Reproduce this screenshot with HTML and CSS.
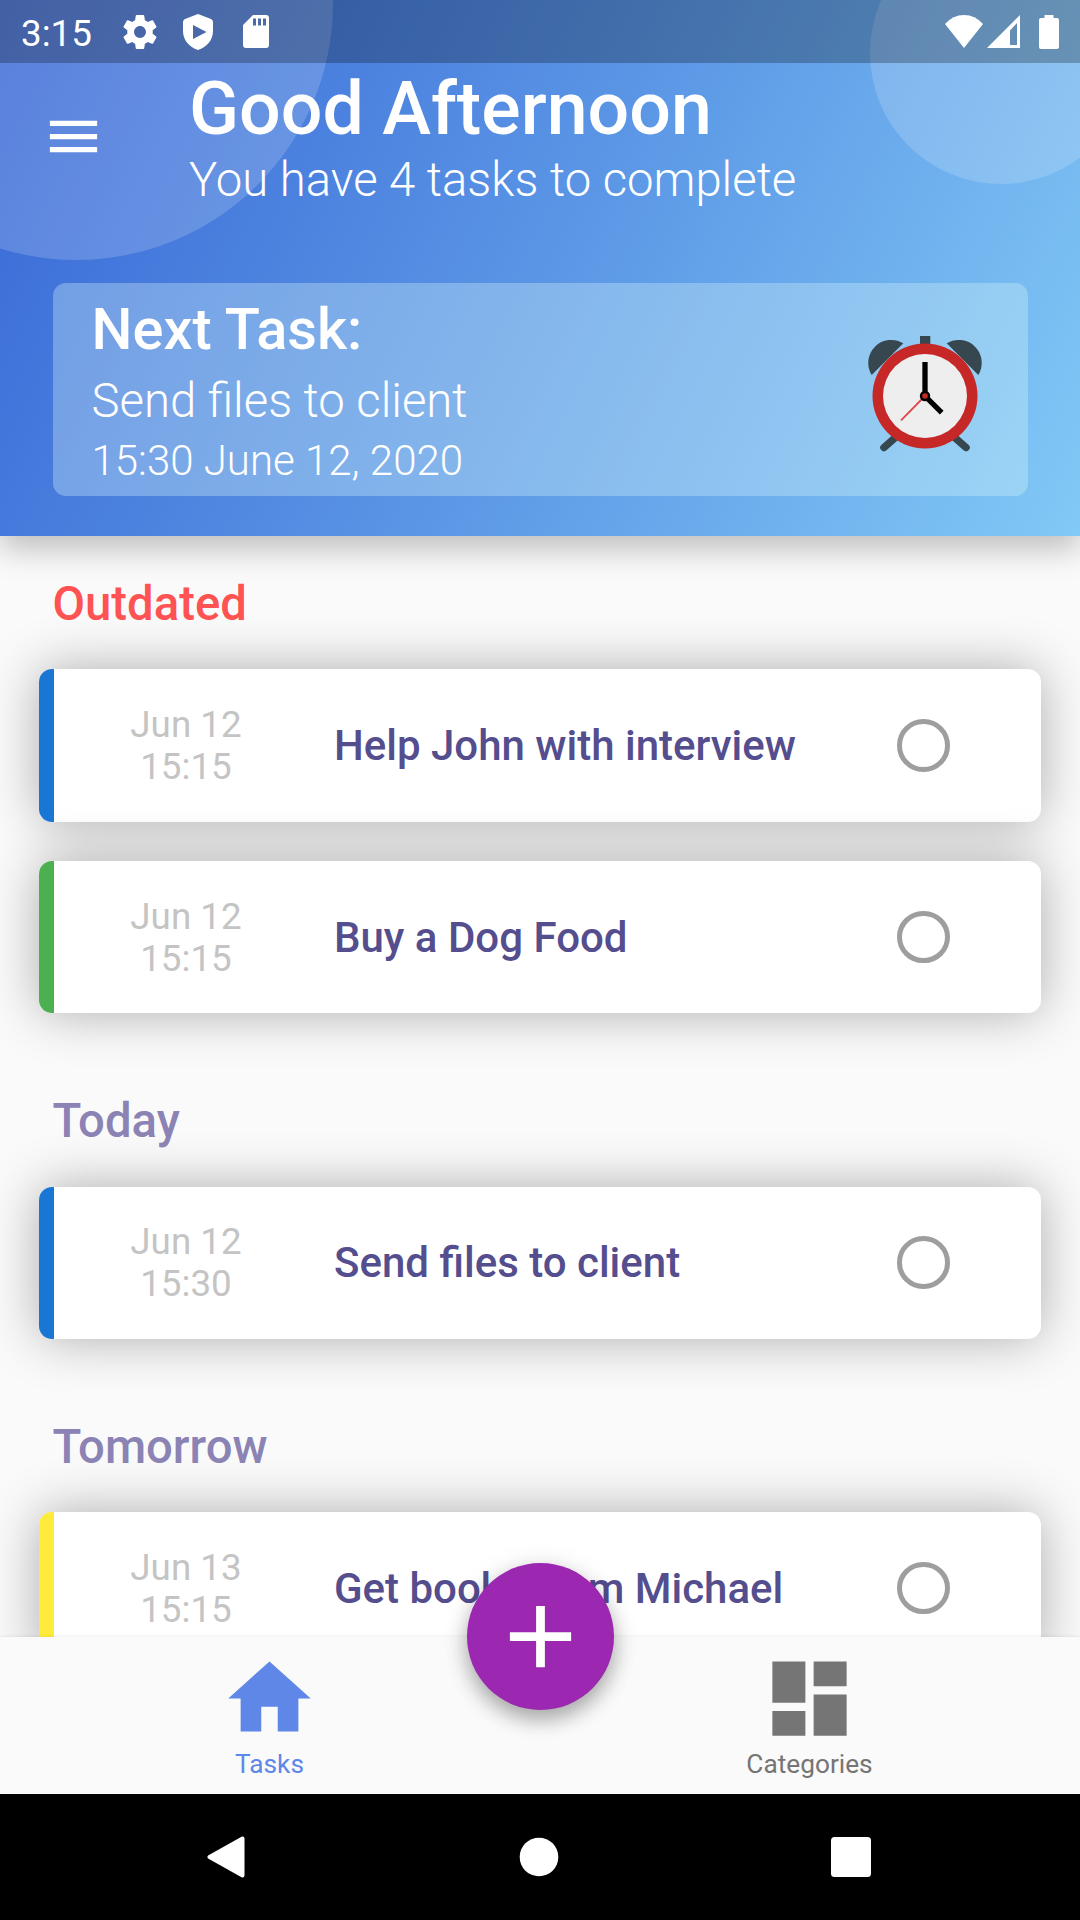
FILE: index.html
```html
<!DOCTYPE html>
<html lang="en">
<head>
    <meta charset="UTF-8">
    <title>Tasks</title>
    <link rel="stylesheet" href="styles.css">
</head>
<body>
<div class="screen">
    <header class="header">
        <div class="bubble bubble-left"></div>
        <div class="bubble bubble-right"></div>

        <div class="status-bar">
            <span class="clock">3:15</span>
            <svg class="status-gear" viewBox="2 2 20 20"><path d="M19.43 12.98c.04-.32.07-.64.07-.98s-.03-.66-.07-.98l2.11-1.65c.19-.15.24-.42.12-.64l-2-3.46c-.12-.22-.39-.3-.61-.22l-2.49 1c-.52-.4-1.08-.73-1.69-.98l-.38-2.65C14.46 2.18 14.25 2 14 2h-4c-.25 0-.46.18-.49.42l-.38 2.65c-.61.25-1.17.59-1.69.98l-2.49-1c-.23-.09-.49 0-.61.22l-2 3.46c-.13.22-.07.49.12.64l2.11 1.65c-.04.32-.07.65-.07.98s.03.66.07.98l-2.11 1.65c-.19.15-.24.42-.12.64l2 3.46c.12.22.39.3.61.22l2.49-1c.52.4 1.08.73 1.69.98l.38 2.65c.03.24.24.42.49.42h4c.25 0 .46-.18.49-.42l.38-2.65c.61-.25 1.17-.59 1.69-.98l2.49 1c.23.09.49 0 .61-.22l2-3.46c.12-.22.07-.49-.12-.64l-2.11-1.65zM12 15.5c-1.93 0-3.5-1.57-3.5-3.5s1.57-3.5 3.5-3.5 3.500 1.57 3.500 3.500-1.57 3.500-3.500 3.500z"/></svg>
            <svg class="status-shield" viewBox="0 0 30 36"><path fill-rule="evenodd" d="M15 0L28 5Q30 6 30 8V17C30 26 24 33 15 36C6 33 0 26 0 17V8Q0 6 2 5ZM10 11V25L23.500 18Z"/></svg>
            <svg class="status-sd" viewBox="0 0 26 33"><path fill-rule="evenodd" d="M10 0H23Q26 0 26 3V30Q26 33 23 33H3Q0 33 0 30V10ZM10 3.500V10.500H13V3.500ZM15 3.500V10.500H18V3.500ZM20 3.500V10.500H23V3.500Z"/></svg>
            <span class="spacer"></span>
            <svg class="status-wifi" viewBox="0 0 38 33"><path d="M0 9Q8 0 19 0T38 9L19 33Z"/></svg>
            <svg class="status-signal" viewBox="0 0 33 33"><path fill-rule="evenodd" d="M0 33L33 0V33ZM23 15.500V30H30V8Z"/></svg>
            <svg class="status-battery" viewBox="0 0 20 34"><path d="M5.500 0H14.500V3H18Q20 3 20 5V32Q20 34 18 34H2Q0 34 0 32V5Q0 3 2 3H5.500Z"/></svg>
        </div>

        <div class="app-bar">
            <svg class="menu" viewBox="0 0 24 24"><path d="M3 18h18v-2H3v2zm0-5h18v-2H3v2zm0-7v2h18V6H3z"/></svg>
            <div class="greeting">
                <h1>Good Afternoon</h1>
                <p>You have 4 tasks to complete</p>
            </div>
        </div>

        <div class="next-task">
            <div class="next-task-text">
                <h2>Next Task:</h2>
                <p class="next-title">Send files to client</p>
                <p class="next-date">15:30 June 12, 2020</p>
            </div>
            <svg class="alarm" viewBox="0 0 120 120">
                <g fill="#37474f">
                    <path d="M38.300 7.300A23 23 0 0 0 6.700 39Z"/>
                    <path d="M81.700 7.300A23 23 0 0 1 113.300 39Z"/>
                    <path d="M55 0H65.300V12H55Z"/>
                </g>
                <path d="M40 93L19 111.500M80 93L101 111.500" stroke="#37474f" stroke-width="7.500" stroke-linecap="round"/>
                <circle cx="60" cy="60" r="52.500" fill="#c62828"/>
                <circle cx="60" cy="60" r="42" fill="#eee"/>
                <path d="M60 26V60L76.700 76.700" fill="none" stroke="#000" stroke-width="5.300"/>
                <path d="M60 60L36 84.300" stroke="#e0444c" stroke-width="1.800"/>
                <circle cx="60" cy="60" r="5.200" fill="#000"/>
                <circle cx="60" cy="60" r="2.800" fill="#c62828"/>
            </svg>
        </div>
    </header>

    <main class="tasks">
        <h3 class="outdated">Outdated</h3>
        <div class="task blue">
            <div class="date">Jun 12<br>15:15</div>
            <div class="title">Help John with interview</div>
            <div class="check"></div>
        </div>
        <div class="task green">
            <div class="date">Jun 12<br>15:15</div>
            <div class="title">Buy a Dog Food</div>
            <div class="check"></div>
        </div>

        <h3>Today</h3>
        <div class="task blue">
            <div class="date">Jun 12<br>15:30</div>
            <div class="title">Send files to client</div>
            <div class="check"></div>
        </div>

        <h3>Tomorrow</h3>
        <div class="task yellow">
            <div class="date">Jun 13<br>15:15</div>
            <div class="title">Get books from Michael</div>
            <div class="check"></div>
        </div>
    </main>

    <nav class="tabs">
        <div class="tab active">
            <svg viewBox="0 0 24 24"><path d="M10 20v-6h4v6h5v-8h3L12 3 2 12h3v8z"/></svg>
            <span>Tasks</span>
        </div>
        <div class="tab">
            <svg viewBox="0 0 24 24"><path d="M3 13h8V3H3v10zm0 8h8v-6H3v6zm10 0h8V11h-8v10zm0-18v6h8V3h-8z"/></svg>
            <span>Categories</span>
        </div>
        <div class="fab">
            <svg viewBox="0 0 24 24"><path d="M19 13h-6v6h-2v-6H5v-2h6V5h2v6h6v2z"/></svg>
        </div>
    </nav>

    <div class="system-nav">
        <svg viewBox="0 0 42 42"><path d="M3.500 21L36.500 2.500V39.500Z" stroke="#fff" stroke-width="4" stroke-linejoin="round"/></svg>
        <svg viewBox="0 0 42 42"><circle cx="21" cy="21" r="19.300"/></svg>
        <svg viewBox="0 0 42 42"><rect x="1" y="1" width="40" height="40" rx="3.500"/></svg>
    </div>
</div>
</body>
</html>
```
FILE: styles.css
```css
* {
    box-sizing: border-box;
}
body, h1, h2, h3, p {
    margin: 0;
}
body {
    font-family: Roboto, sans-serif;
    background: #fafafa;
}
svg {
    display: block;
    flex: none;
    fill: #fff;
}
.screen {
    width: 1080px;
    height: 1920px;
    display: flex;
    flex-direction: column;
    overflow: hidden;
}

/* header */
.header {
    position: relative;
    z-index: 1;
    flex: none;
    height: 535.5px;
    overflow: hidden;
    color: #fff;
    background: linear-gradient(116.4deg, #3867d6, #5a95e5 50%, #81c9f6);
    box-shadow: 0 12px 30px rgba(0, 0, 0, 0.25);
}
.bubble {
    position: absolute;
    border-radius: 50%;
    background: rgba(255, 255, 255, 0.17);
}
.bubble-left {
    left: -181px;
    top: -254px;
    width: 514px;
    height: 514px;
}
.bubble-right {
    left: 870px;
    top: -78px;
    width: 262px;
    height: 262px;
}
.status-bar {
    position: relative;
    display: flex;
    align-items: center;
    height: 63px;
    padding: 0 21px;
    background: rgba(0, 0, 0, 0.25);
}
.clock {
    width: 102px;
    font-size: 36.75px;
    padding-top: 3px;
}
.status-gear {
    width: 34px;
    height: 34px;
}
.status-shield {
    width: 30px;
    height: 36px;
    margin-left: 26px;
}
.status-sd {
    width: 26px;
    height: 33px;
    margin-left: 30px;
}
.spacer {
    flex: 1;
}
.status-wifi {
    width: 38px;
    height: 33px;
}
.status-signal {
    width: 33px;
    height: 33px;
    margin: 0 19px 0 4px;
}
.status-battery {
    width: 20px;
    height: 34px;
}
.app-bar {
    position: relative;
    display: flex;
    align-items: center;
    height: 147px;
    padding-left: 42px;
}
.menu {
    width: 63px;
    height: 63px;
}
.greeting {
    margin-left: 84px;
    padding-top: 2px;
}
h1 {
    padding-bottom: 2px;
    font-size: 73.5px;
    line-height: 84px;
    font-weight: 500;
}
.greeting p, .next-title {
    font-size: 47.25px;
    line-height: 55px;
    font-weight: 300;
}
.next-task {
    position: relative;
    display: flex;
    align-items: center;
    justify-content: space-between;
    height: 213px;
    margin: 73px 52.5px 0;
    padding: 0 43px 0 39px;
    border-radius: 13px;
    background: rgba(215, 245, 250, 0.33);
}
h2 {
    font-size: 57.75px;
    line-height: 68px;
    font-weight: 500;
}
.next-title {
    padding-top: 11px;
}
.next-date {
    padding-top: 7px;
    font-size: 42px;
    line-height: 49px;
    font-weight: 300;
}
.alarm {
    width: 120px;
    height: 120px;
    margin-top: 13px;
    overflow: visible;
}

/* task list */
.tasks {
    flex: 1;
    min-height: 0;
    overflow: hidden;
}
h3 {
    height: 133.9px;
    padding: 40.5px 52.5px 0;
    font-size: 47.25px;
    line-height: 57px;
    font-weight: 500;
    color: #8a83b4;
}
.outdated {
    color: #ff5252;
}
.task {
    display: flex;
    align-items: center;
    height: 152.25px;
    margin: 0 39.4px 39.4px;
    border-radius: 13px;
    background: #fff;
    box-shadow: 0 0 52px rgba(0, 0, 0, 0.31);
}
.task::before {
    content: "";
    align-self: stretch;
    width: 14.6px;
    border-radius: 13px 0 0 13px;
}
.blue::before {
    background: #1976d2;
}
.green::before {
    background: #4caf50;
}
.yellow::before {
    background: #ffeb3b;
}
.date {
    width: 264px;
    padding-top: 1px;
    text-align: center;
    font-size: 36.75px;
    line-height: 42px;
    color: #c4c4c4;
}
.title {
    flex: 1;
    padding-left: 16px;
    font-size: 42px;
    font-weight: 500;
    color: #544d8e;
}
.check {
    width: 52.5px;
    height: 52.5px;
    margin-right: 91px;
    border: 5.25px solid #9e9e9e;
    border-radius: 50%;
}

/* bottom bar */
.tabs {
    position: relative;
    flex: none;
    display: flex;
    height: 157.5px;
    background: #fafafa;
    box-shadow: 0 0 4px rgba(0, 0, 0, 0.1);
}
.tab {
    flex: 1;
    display: flex;
    flex-direction: column;
    align-items: center;
    padding: 12.5px 1px 0 0;
    font-size: 26.25px;
    line-height: 31px;
    color: #757575;
}
.tab svg {
    width: 99px;
    height: 99px;
    fill: currentColor;
}
.tab span {
    margin-top: 1px;
}
.active {
    color: #5e87e8;
}
.fab {
    position: absolute;
    left: 466.5px;
    top: -73.5px;
    display: flex;
    align-items: center;
    justify-content: center;
    width: 147px;
    height: 147px;
    border-radius: 50%;
    background: #9c27b0;
    box-shadow: 0 10px 20px rgba(0, 0, 0, 0.3), 0 2px 30px rgba(0, 0, 0, 0.08);
}
.fab svg {
    width: 105px;
    height: 105px;
}
.system-nav {
    position: relative;
    flex: none;
    display: flex;
    align-items: center;
    justify-content: space-between;
    height: 126px;
    padding: 0 208px 0 206px;
    background: #000;
}
.system-nav svg {
    width: 42px;
    height: 42px;
}
```
